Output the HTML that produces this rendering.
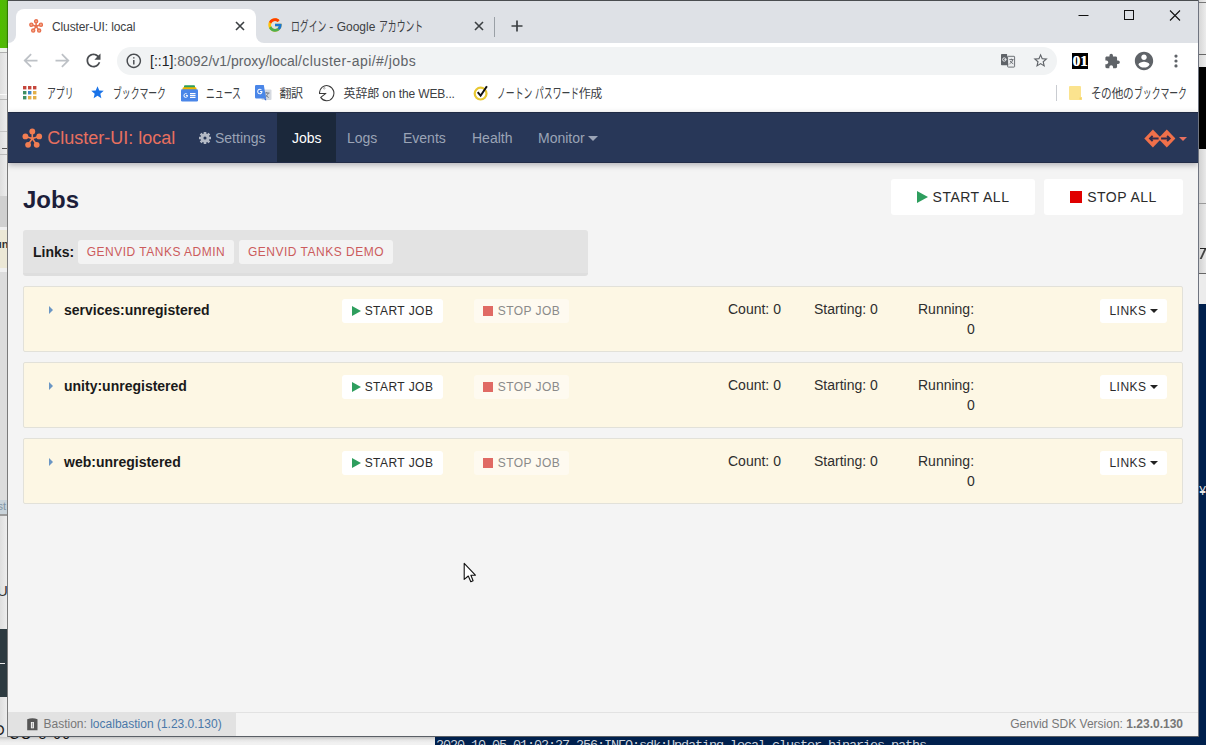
<!DOCTYPE html>
<html lang="ja">
<head>
<meta charset="utf-8">
<title>Cluster-UI: local</title>
<style>
*{box-sizing:border-box;margin:0;padding:0}
html,body{width:1206px;height:745px;overflow:hidden}
body{position:relative;background:#e9e9e9;font-family:"Liberation Sans","Noto Sans CJK JP",sans-serif;color:#222}
.abs{position:absolute}
/* desktop behind */
#desk-left{left:0;top:0;width:8px;height:745px;background:linear-gradient(90deg,#dedede,#efefef);overflow:hidden}
#desk-right{left:1198px;top:0;width:8px;height:745px;background:#00204d;overflow:hidden}
#desk-bottom{left:0;top:737px;width:435px;height:8px;background:linear-gradient(#c4c4c4,#e6e6e6 3px,#f1f1f1 6px);overflow:hidden}
#term-bottom{left:435px;top:737px;width:771px;height:8px;background:#00204d;overflow:hidden}
/* chrome window */
#win{left:8px;top:1px;width:1190px;height:735px;background:#f4f4f4;overflow:hidden}
#tabstrip{left:0;top:0;width:1190px;height:42px;background:#dee1e6;z-index:2}
#tab1{left:8px;top:8px;width:240px;height:34px;background:#fff;border-radius:8px 8px 0 0}
#toolbar{left:0;top:41px;width:1190px;height:37px;background:#fff}
#omni{left:109px;top:5px;width:940px;height:28px;border-radius:14px;background:#f1f3f4}
#bookmarks{left:0;top:78px;width:1190px;height:33px;background:#fff}
.ui{font-family:"Liberation Sans","Noto Sans CJK JP",sans-serif;font-size:12px;color:#3c4043;white-space:nowrap}
.jp{display:inline-block;transform-origin:0 50%;white-space:nowrap;font-size:14px;vertical-align:top;position:relative;top:-1px}
/* page */
#page{left:0;top:111px;width:1190px;height:624px;background:#f4f4f4;font-family:"Liberation Sans",sans-serif}
#navbar{left:0;top:0;width:1190px;height:51px;background:#283758;box-shadow:0 2px 6px rgba(0,0,20,.28)}
#navbar:before,#navbar:after{content:'';position:absolute;left:0;width:1190px;height:1px;background:#1f2a44;top:0;z-index:3}
#navbar:after{top:50px;background:#222c47}
#nav-active{left:269px;top:0;width:59px;height:51px;background:#1b283b}
.nav{top:0;height:51px;line-height:52px;font-size:14px;color:#9ba4b6;white-space:nowrap}
.btn{background:#fff;border-radius:3px;white-space:nowrap;color:#2b2b2b;letter-spacing:.5px}
.card{left:15px;width:1160px;height:66px;background:#fdf7e4;border:1px solid #e2e1d9;border-radius:2px}
.card .name{left:40px;top:15px;font-size:14px;font-weight:bold;color:#1a1a1a;white-space:nowrap}
.card .tri{left:25px;top:19px;width:0;height:0;border-left:4.5px solid #6a96c4;border-top:4px solid transparent;border-bottom:4px solid transparent}
.card .start{left:318px;top:12px;width:101px;height:24px;font-size:12px;line-height:24px;letter-spacing:.45px}
.card .stop{left:450px;top:12px;width:95px;height:24px;font-size:12px;line-height:24px;letter-spacing:.45px;color:#8a8a8a;background:#fefaf0}
.card .links{left:1076px;top:12px;width:67px;height:24px;font-size:12px;line-height:24px}
.card .stat{top:14px;font-size:14px;color:#2e2e2e;white-space:nowrap}
.play{display:inline-block;width:0;height:0;border-left:9px solid #2e9e5e;border-top:5px solid transparent;border-bottom:5px solid transparent;vertical-align:-1px;margin-right:4px}
.sq{display:inline-block;width:10px;height:10px;background:#e06a64;vertical-align:-1px;margin-right:5px}
.caret{display:inline-block;width:0;height:0;border-top:4px solid #222;border-left:4px solid transparent;border-right:4px solid transparent;vertical-align:2px;margin-left:3px}
</style>
</head>
<body>
<div id="desk-left" class="abs">
  <div class="abs" style="left:0;top:0;width:8px;height:48px;background:linear-gradient(90deg,#4fbd00 0,#52b60a 80%,#2f7d00 90%)"></div>
  <div class="abs" style="left:0;top:48px;width:8px;height:4px;background:#eef2ec"></div>
  <div class="abs" style="left:0;top:52px;width:8px;height:1px;background:#b0b0b0"></div>
  <div class="abs" style="left:0;top:94px;width:8px;height:1px;background:#fafafa"></div>
  <div class="abs" style="left:0;top:99px;width:8px;height:1px;background:#b8b8b8"></div>
  <div class="abs" style="left:0;top:131px;width:8px;height:1px;background:#c4c4c4"></div>
  <div class="abs" style="left:2px;top:148px;width:6px;height:1px;background:#555"></div>
  <div class="abs" style="left:0;top:154px;width:8px;height:1px;background:#bbb"></div>
  <div class="abs" style="left:0;top:196px;width:8px;height:31px;background:#d0d0d0"></div>
  <div class="abs" style="left:0;top:227px;width:8px;height:3px;background:#f0f0f0"></div>
  <div class="abs" style="left:0;top:230px;width:8px;height:38px;background:#ece8d6"></div>
  <div class="abs" style="left:-5px;top:238px;font-size:11px;line-height:13px;color:#333;font-weight:bold">un</div>
  <div class="abs" style="left:0;top:268px;width:8px;height:4px;background:#f0f0f0"></div>
  <div class="abs" style="left:0;top:272px;width:8px;height:228px;background:#dcdcdc"></div>
  <div class="abs" style="left:0;top:500px;width:8px;height:14px;background:#c9d3da"></div>
  <div class="abs" style="left:-5px;top:500px;font-size:11px;line-height:13px;color:#7f95a6">ist</div>
  <div class="abs" style="left:0;top:514px;width:8px;height:2px;background:#9a9a9a"></div>
  <div class="abs" style="left:-3px;top:582px;font-size:15px;line-height:17px;color:#333">U</div>
  <div class="abs" style="left:0;top:629px;width:8px;height:68px;background:#2d3a40"></div>
  <div class="abs" style="left:0;top:663px;width:5px;height:1px;background:#e8e8e8"></div>
  <div class="abs" style="left:-7px;top:721px;font-size:15px;line-height:17px;color:#222">O</div>
  <div class="abs" style="left:7px;top:48px;width:1px;height:689px;background:#7a7a7a"></div>
</div>
<div id="desk-right" class="abs">
  <div class="abs" style="left:0;top:0;width:8px;height:67px;background:linear-gradient(90deg,#d4d4d4,#ececec)"></div>
  <div class="abs" style="left:0;top:2px;width:8px;height:1px;background:#777"></div>
  <div class="abs" style="left:0;top:54px;width:8px;height:1px;background:#666"></div>
  <div class="abs" style="left:0;top:67px;width:8px;height:82px;background:#000"></div>
  <div class="abs" style="left:0;top:149px;width:8px;height:155px;background:linear-gradient(90deg,#cfcfcf,#e9e9e9)"></div>
  <div class="abs" style="left:1px;top:203px;width:7px;height:1px;background:#999"></div>
  <div class="abs" style="left:2px;top:248px;width:6px;height:1px;background:#222"></div>
  <div class="abs" style="left:4px;top:249px;width:2px;height:10px;background:#444;transform:skewX(-25deg)"></div>
  <div class="abs" style="left:0;top:273px;width:8px;height:1px;background:#666"></div>
  <div class="abs" style="left:0;top:274px;width:8px;height:30px;background:#ececec"></div>
  <div class="abs" style="left:1px;top:485px;font-size:12px;line-height:14px;color:#e8e8e8;font-family:'Liberation Mono',monospace">¥</div>
  <div class="abs" style="left:0;top:0;width:1px;height:737px;background:#6f7480"></div>
</div>
<div id="desk-bottom" class="abs">
  <div class="abs ui" style="left:9px;top:-10.300px;font-size:14px;line-height:14px;color:#111;letter-spacing:1.500px">CO 8 60</div>
</div>
<div id="term-bottom" class="abs"><div class="abs" style="left:1px;top:2px;font-family:'Liberation Mono',monospace;font-size:13.5px;line-height:14px;letter-spacing:-1.1px;color:#cdd3dc;white-space:pre">2020-10-05 01:02:27.256:INFO:sdk:Updating local cluster binaries paths</div></div>
<div class="abs" style="left:8px;top:0;width:1190px;height:1px;background:#4a4d50"></div>
<div class="abs" style="left:8px;top:736px;width:1191px;height:1px;background:#5a5f66"></div>

<div id="win" class="abs">
  <div id="tabstrip" class="abs">
    <div class="abs" style="left:0;top:34px;width:8px;height:8px;background:#fff"></div>
    <div class="abs" style="left:-8px;top:26px;width:16px;height:16px;border-radius:8px;background:#dee1e6"></div>
    <div class="abs" style="left:248px;top:34px;width:8px;height:8px;background:#fff"></div>
    <div class="abs" style="left:248px;top:26px;width:16px;height:16px;border-radius:8px;background:#dee1e6"></div>
    <div id="tab1" class="abs"></div>
    <svg class="abs" style="left:20.800px;top:17.500px" width="14.500" height="14.500" viewBox="0 0 21 21"><g stroke="#e8714f" stroke-width="2.200" stroke-linecap="round"><line x1="10.300" y1="10.600" x2="10.300" y2="3.400"/><line x1="10.300" y1="10.600" x2="3.400" y2="8.400"/><line x1="10.300" y1="10.600" x2="17.200" y2="8.400"/><line x1="10.300" y1="10.600" x2="6.100" y2="16.800"/><line x1="10.300" y1="10.600" x2="14.700" y2="16.800"/></g><g fill="#f6a98c" stroke="#e8714f" stroke-width="1.900"><circle cx="10.300" cy="3.400" r="2.300"/><circle cx="3.400" cy="8.400" r="2.300"/><circle cx="17.200" cy="8.400" r="2.300"/><circle cx="6.100" cy="16.800" r="2.300"/><circle cx="14.700" cy="16.800" r="2.300"/></g><circle cx="10.300" cy="10.600" r="2" fill="#e8714f"/></svg>
    <div class="abs ui" style="left:44px;top:19px;color:#3c4043;letter-spacing:-.12px">Cluster-UI: local</div>
    <svg class="abs" style="left:224px;top:17px" width="16" height="16" viewBox="0 0 16 16"><path d="M4 4L12 12M12 4L4 12" stroke="#3c4043" stroke-width="1.6" fill="none"/></svg>
    <svg class="abs" style="left:258.500px;top:16.200px" width="16" height="16" viewBox="0 0 48 48"><path fill="#FFC107" d="M43.611 20.083H42V20H24v8h11.303c-1.649 4.657-6.08 8-11.303 8-6.627 0-12-5.373-12-12s5.373-12 12-12c3.059 0 5.842 1.154 7.961 3.039l5.657-5.657C34.046 6.053 29.268 4 24 4 12.955 4 4 12.955 4 24s8.955 20 20 20 20-8.955 20-20c0-1.341-.138-2.65-.389-3.917z"/><path fill="#FF3D00" d="M6.306 14.691l6.571 4.819C14.655 15.108 18.961 12 24 12c3.059 0 5.842 1.154 7.961 3.039l5.657-5.657C34.046 6.053 29.268 4 24 4 16.318 4 9.656 8.337 6.306 14.691z"/><path fill="#4CAF50" d="M24 44c5.166 0 9.86-1.977 13.409-5.192l-6.19-5.238A11.91 11.91 0 0124 36c-5.202 0-9.619-3.317-11.283-7.946l-6.522 5.025C9.505 39.556 16.227 44 24 44z"/><path fill="#1976D2" d="M43.611 20.083H42V20H24v8h11.303a12.04 12.04 0 01-4.087 5.571l.003-.002 6.19 5.238C36.971 39.205 44 34 44 24c0-1.341-.138-2.65-.389-3.917z"/></svg>
    <div class="abs ui" style="left:283px;top:18px;color:#3c4043;line-height:16px"><span class="jp" style="width:35.0px;transform:scaleX(.63)">ログイン</span> - Google <span class="jp" style="width:43.8px;transform:scaleX(.63)">アカウント</span></div>
    <svg class="abs" style="left:463px;top:17px" width="16" height="16" viewBox="0 0 16 16"><path d="M4 4L12 12M12 4L4 12" stroke="#3c4043" stroke-width="1.6" fill="none"/></svg>
    <div class="abs" style="left:486px;top:16px;width:1px;height:20px;background:#9aa0a6"></div>
    <svg class="abs" style="left:501px;top:17px" width="16" height="16" viewBox="0 0 16 16"><path d="M8 2.5V13.5M2.5 8H13.5" stroke="#3c4043" stroke-width="1.7"/></svg>
    <svg class="abs" style="left:1060px;top:0" width="130" height="30" viewBox="0 0 130 30"><path d="M10.5 14.5H20.5" stroke="#111" stroke-width="1"/><rect x="56.5" y="9.5" width="9" height="9" fill="none" stroke="#111" stroke-width="1"/><path d="M102 9.5L112 19.5M112 9.5L102 19.5" stroke="#111" stroke-width="1.1"/></svg>
  </div>
  <div id="toolbar" class="abs">
<div id="omni" class="abs"></div>
<svg class="abs" style="left:11.5px;top:7.8px" width="21" height="21" viewBox="0 0 24 24" ><path fill="#bdc1c6" d="M20 11H7.83l5.59-5.59L12 4l-8 8 8 8 1.41-1.41L7.83 13H20v-2z"/></svg>
<svg class="abs" style="left:43.5px;top:7.8px" width="21" height="21" viewBox="0 0 24 24" ><path fill="#bdc1c6" d="M12 4l-1.41 1.41L16.17 11H4v2h12.17l-5.58 5.59L12 20l8-8z"/></svg>
<svg class="abs" style="left:75.3px;top:7.8px" width="21" height="21" viewBox="0 0 24 24" ><path fill="#4a4d51" d="M17.65 6.35C16.2 4.9 14.21 4 12 4c-4.42 0-7.99 3.58-7.99 8s3.57 8 7.99 8c3.73 0 6.84-2.55 7.73-6h-2.08c-.82 2.33-3.04 4-5.65 4-3.31 0-6-2.69-6-6s2.69-6 6-6c1.66 0 3.14.69 4.22 1.78L13 11h7V4l-2.35 2.35z"/></svg>
<svg class="abs" style="left:117.2px;top:9.7px" width="17.6" height="17.6" viewBox="0 0 24 24" ><path fill="#4a4d51" d="M11 17h2v-6h-2v6zm1-15C6.48 2 2 6.48 2 12s4.48 10 10 10 10-4.48 10-10S17.52 2 12 2zm0 18c-4.41 0-8-3.59-8-8s3.59-8 8-8 8 3.59 8 8-3.59 8-8 8zM11 9h2V7h-2v2z"/></svg>
<div class="abs ui" style="left:142px;top:11px;font-size:14px;letter-spacing:0;color:#5f6368"><span style="color:#202124">[::1]</span>:8092/v1/proxy/local<span style="letter-spacing:.45px">/cluster-api/#/jobs</span></div>
<svg class="abs" style="left:993px;top:11.800px" width="15" height="15" viewBox="0 0 15 15"><rect x="6.600" y="2.300" width="7" height="10.800" rx=".6" fill="#eceef0" stroke="#5f6368" stroke-width=".9"/><path d="M8.300 5.600h4.200M10.400 4.700v.9M11.700 5.600c-.4 2-1.500 3.300-3.100 4.200M9.200 7c.7 1.300 1.700 2.200 3.100 2.800" stroke="#5f6368" stroke-width=".9" fill="none"/><path d="M.8 0h5.200l1.300 11.300H.8a.8.800 0 0 1-.8-.8V.8A.8.800 0 0 1 .8 0z" fill="#5f6368"/><circle cx="3.300" cy="5.500" r="1.700" fill="none" stroke="#e8eaed" stroke-width="1"/><path d="M3.300 5.500h2" stroke="#e8eaed" stroke-width=".9"/></svg>
<svg class="abs" style="left:1023.800px;top:10.200px" width="17.200" height="17.200" viewBox="0 0 24 24" ><path fill="#5f6368" d="M22 9.24l-7.19-.62L12 2 9.19 8.63 2 9.24l5.46 4.73L5.82 21 12 17.27 18.18 21l-1.63-7.03L22 9.24zM12 15.4l-3.76 2.27 1-4.28-3.32-2.88 4.38-.38L12 6.1l1.71 4.04 4.38.38-3.32 2.88 1 4.28L12 15.4z"/></svg>
<div class="abs" style="left:1064px;top:11px;width:16px;height:16px;background:#000;color:#fff;font-family:'Liberation Serif',serif;font-weight:bold;font-size:15px;line-height:16px;text-align:center;letter-spacing:0;text-shadow:.4px 0 0 #fff">01</div>
<svg class="abs" style="left:1095.75px;top:10.75px" width="16.5" height="16.5" viewBox="0 0 24 24" ><path fill="#5f6368" d="M20.5 11H19V7c0-1.1-.9-2-2-2h-4V3.5C13 2.12 11.88 1 10.5 1S8 2.12 8 3.5V5H4c-1.1 0-1.99.9-1.99 2v3.8H3.5c1.49 0 2.7 1.21 2.7 2.7s-1.21 2.7-2.7 2.7H2V20c0 1.1.9 2 2 2h3.8v-1.5c0-1.49 1.21-2.7 2.7-2.7 1.49 0 2.7 1.21 2.7 2.7V22H17c1.1 0 2-.9 2-2v-4h1.5c1.38 0 2.5-1.12 2.5-2.5S21.88 11 20.5 11z"/></svg>
<svg class="abs" style="left:1125.2px;top:8.0px" width="22" height="22" viewBox="0 0 24 24" ><path fill="#5f6368" d="M12 2C6.48 2 2 6.48 2 12s4.48 10 10 10 10-4.48 10-10S17.52 2 12 2zm0 3c1.66 0 3 1.34 3 3s-1.34 3-3 3-3-1.34-3-3 1.34-3 3-3zm0 14.2c-2.5 0-4.71-1.28-6-3.22.03-1.99 4-3.08 6-3.08 1.99 0 5.97 1.09 6 3.08-1.29 1.94-3.5 3.22-6 3.22z"/></svg>
<svg class="abs" style="left:1165.4px;top:11.4px" width="6" height="16" viewBox="0 0 6 16"><g fill="#5f6368"><circle cx="3" cy="3.1" r="1.6"/><circle cx="3" cy="8" r="1.6"/><circle cx="3" cy="12.9" r="1.6"/></g></svg>
</div>
<div id="bookmarks" class="abs">
<div class="abs ui" style="left:38.5px;top:6.5px;font-size:12px;color:#3c4043;line-height:16px;height:16px"><span class="jp" style="width:26.2px;transform:scaleX(.63)">アプリ</span></div>
<div class="abs ui" style="left:104.5px;top:6.5px;font-size:12px;color:#3c4043;line-height:16px;height:16px"><span class="jp" style="width:52.5px;transform:scaleX(.63)">ブックマーク</span></div>
<div class="abs ui" style="left:197.5px;top:6.5px;font-size:12px;color:#3c4043;line-height:16px;height:16px"><span class="jp" style="width:35.0px;transform:scaleX(.63)">ニュース</span></div>
<div class="abs ui" style="left:271.5px;top:6.5px;font-size:12px;color:#3c4043;line-height:16px;height:16px"><span style="letter-spacing:-.5px">翻訳</span></div>
<div class="abs ui" style="left:335.5px;top:6.5px;font-size:12px;color:#3c4043;line-height:16px;height:16px"><span style="letter-spacing:-.12px">英辞郎 on the WEB...</span></div>
<div class="abs ui" style="left:488.5px;top:6.5px;font-size:12px;color:#3c4043;line-height:16px;height:16px"><span class="jp" style="width:35.0px;transform:scaleX(.63)">ノートン</span> <span class="jp" style="width:43.8px;transform:scaleX(.63)">パスワード</span><span style="letter-spacing:-.4px">作成</span></div>
<div class="abs ui" style="left:1083px;top:6.5px;font-size:12px;color:#3c4043;line-height:16px;height:16px"><span class="jp" style="width:10.2px;transform:scaleX(.76)">そ</span><span class="jp" style="width:10.2px;transform:scaleX(.76)">の</span><span>他</span><span class="jp" style="width:10.2px;transform:scaleX(.76)">の</span><span class="jp" style="width:52.5px;transform:scaleX(.63)">ブックマーク</span></div>
<svg class="abs" style="left:15px;top:7px" width="14" height="14" viewBox="0 0 14 14"><rect x="0" y="0" width="3.4" height="3.4" fill="#c5463c"/><rect x="5" y="0" width="3.4" height="3.4" fill="#c5463c"/><rect x="10" y="0" width="3.4" height="3.4" fill="#c5463c"/><rect x="0" y="5" width="3.4" height="3.4" fill="#3f8f63"/><rect x="5" y="5" width="3.4" height="3.4" fill="#3d86c6"/><rect x="10" y="5" width="3.4" height="3.4" fill="#e2b04a"/><rect x="0" y="10" width="3.4" height="3.4" fill="#3f8f63"/><rect x="5" y="10" width="3.4" height="3.4" fill="#e2b04a"/><rect x="10" y="10" width="3.4" height="3.4" fill="#e2b04a"/></svg>
<svg class="abs" style="left:81.5px;top:6.0px" width="15" height="15" viewBox="0 0 24 24" ><path fill="#1a73e8" d="M12 17.27L18.18 21l-1.64-7.03L22 9.24l-7.19-.61L12 2 9.19 8.63 2 9.24l5.46 4.73L5.82 21z"/></svg>
<svg class="abs" style="left:173px;top:5.5px" width="17" height="17" viewBox="0 0 17 17"><rect x="3" y="0.3" width="11" height="6" rx="1" fill="#2e9e5b"/><rect x="1.6" y="2.2" width="13.800" height="6" rx="1" fill="#f2b600"/><rect x="0" y="4.300" width="17" height="12.200" rx="1.300" fill="#4a86e8"/><path d="M6.800 10.100H4.900v.9h1c-.1.600-.6.900-1.100.9-.8 0-1.400-.6-1.400-1.400s.6-1.400 1.400-1.400c.35 0 .65.120.9.350l.65-.65C5.900 8.400 5.400 8.200 4.800 8.200c-1.300 0-2.300 1-2.300 2.300s1 2.300 2.300 2.300c1.300 0 2.100-.9 2.100-2.200 0-.17 0-.33-.1-.5z" fill="#fff"/><path d="M9 8.600h5.500M9 10.500h5.500M9 12.400h5.500" stroke="#fff" stroke-width="1.100"/></svg>
<svg class="abs" style="left:247px;top:6px" width="17" height="16" viewBox="0 0 17 16"><rect x="6.500" y="4.500" width="10" height="10.500" rx="1" fill="#d5d9e0"/><path d="M9 8h5.500M11.700 7v1M13.200 8c-.5 2.200-1.800 3.500-3.500 4.400M10.300 9.500c.8 1.400 1.900 2.300 3.400 3" stroke="#6f7785" stroke-width=".9" fill="none"/><path d="M1.200 0H8.800l2.300 13.500H1.200A1.200 1.200 0 0 1 0 12.300V1.200A1.200 1.200 0 0 1 1.200 0z" fill="#4a86e8"/><path d="M7.300 6.100H5v1h1.300c-.15.800-.8 1.200-1.400 1.200-.95 0-1.700-.8-1.700-1.800s.75-1.800 1.700-1.800c.45 0 .85.170 1.150.45l.7-.7C6.200 3.950 5.600 3.700 4.900 3.700 3.400 3.700 2.200 4.900 2.200 6.500s1.200 2.800 2.700 2.800c1.500 0 2.500-1.100 2.500-2.600 0-.2-.03-.4-.1-.6z" fill="#fff"/><path d="M8.600 13.500l2.500 2.300v-2.300z" fill="#3367d6"/></svg>
<svg class="abs" style="left:311px;top:5.799999999999997px" width="16" height="17" viewBox="0 0 16 17"><path d="M0.500 8.600L6.900 8.400L1.700 12.400A7.200 7.600 0 1 0 0.500 8.600Z" fill="none" stroke="#3a3a3a" stroke-width="1.050" stroke-linejoin="round"/><circle cx="5.300" cy="3.300" r=".8" fill="none" stroke="#777" stroke-width=".6"/></svg>
<svg class="abs" style="left:464.7px;top:4.7px" width="17" height="17" viewBox="0 0 17 17"><circle cx="7.600" cy="9.600" r="5.900" fill="#fff" stroke="#e8c832" stroke-width="2.200"/><path d="M4.700 8.200L7.600 11.700L13.900 2.300" fill="none" stroke="#111" stroke-width="2"/></svg>
<div class="abs" style="left:1048px;top:6px;width:1px;height:16px;background:#c9ccd1"></div>
<svg class="abs" style="left:1061px;top:7px" width="13" height="14" viewBox="0 0 13 14"><path d="M1 0H11A1 1 0 0 1 12 1V11H13V14H1A1 1 0 0 1 0 13V1A1 1 0 0 1 1 0Z" fill="#fbe38e"/><path d="M10.500 11.500H12.500V13.500H10.500Z" fill="#f3d268"/></svg>
</div>

  <div id="page" class="abs">
    <div id="navbar" class="abs">
      <div id="nav-active" class="abs"></div>
      <svg class="abs" style="left:14px;top:16px" width="21" height="21" viewBox="0 0 21 21"><g stroke="#f27d52" stroke-width="1.6" stroke-linecap="round"><line x1="10.3" y1="10.6" x2="10.3" y2="3.4"/><line x1="10.3" y1="10.6" x2="3.4" y2="8.4"/><line x1="10.3" y1="10.6" x2="17.2" y2="8.4"/><line x1="10.3" y1="10.6" x2="6.1" y2="16.8"/><line x1="10.3" y1="10.6" x2="14.7" y2="16.8"/></g><g fill="#f27d52"><circle cx="10.3" cy="3.4" r="2.9"/><circle cx="3.4" cy="8.4" r="2.9"/><circle cx="17.2" cy="8.4" r="2.9"/><circle cx="6.1" cy="16.8" r="2.9"/><circle cx="14.7" cy="16.8" r="2.9"/><circle cx="10.3" cy="10.6" r="1.6"/></g></svg>
      <div class="abs nav" style="left:39.300px;font-size:18px;color:#e8705f">Cluster-UI: local</div>
      <svg class="abs" style="left:191px;top:20px" width="12" height="12" viewBox="0 0 12 12"><g fill="#b3b9c5"><rect x="4.7" y="-0.2" width="2.6" height="3.2" rx=".4" transform="rotate(0 6 6)"/><rect x="4.7" y="-0.2" width="2.6" height="3.2" rx=".4" transform="rotate(45 6 6)"/><rect x="4.7" y="-0.2" width="2.6" height="3.2" rx=".4" transform="rotate(90 6 6)"/><rect x="4.7" y="-0.2" width="2.6" height="3.2" rx=".4" transform="rotate(135 6 6)"/><rect x="4.7" y="-0.2" width="2.6" height="3.2" rx=".4" transform="rotate(180 6 6)"/><rect x="4.7" y="-0.2" width="2.6" height="3.2" rx=".4" transform="rotate(225 6 6)"/><rect x="4.7" y="-0.2" width="2.6" height="3.2" rx=".4" transform="rotate(270 6 6)"/><rect x="4.7" y="-0.2" width="2.6" height="3.2" rx=".4" transform="rotate(315 6 6)"/></g><circle cx="6" cy="6" r="3" fill="none" stroke="#b3b9c5" stroke-width="2.900"/></svg>
      <div class="abs nav" style="left:207px">Settings</div>
      <div class="abs nav" style="left:284px;color:#fff">Jobs</div>
      <div class="abs nav" style="left:339px">Logs</div>
      <div class="abs nav" style="left:395px">Events</div>
      <div class="abs nav" style="left:464px">Health</div>
      <svg class="abs" style="left:1136px;top:17px" width="32" height="19" viewBox="0 0 32 19"><g fill="#f0704a"><path d="M8.9 0.4 L0.3 9.5 L8.9 18.6 L17.5 9.5 Z"/><path d="M22.8 0.4 L14.2 9.5 L22.8 18.6 L31.4 9.5 Z"/></g><g fill="none" stroke="#2e2d4c" stroke-width="1.9"><path d="M6.4 9.5 H14.6 M8.6 6.9 L6 9.5 L8.6 12.1"/><path d="M17.1 9.5 H25.3 M23.1 6.9 L25.7 9.5 L23.1 12.1"/></g></svg><div class="abs" style="left:1170.5px;top:25px;width:0;height:0;border-top:4.5px solid #e8705f;border-left:4px solid transparent;border-right:4px solid transparent"></div>
      <div class="abs nav" style="left:530px">Monitor<span class="caret" style="border-top:5px solid #9ba4b6;border-left:5px solid transparent;border-right:5px solid transparent;margin-left:3px;vertical-align:2px"></span></div>
    </div>
    <div class="abs" style="left:15px;top:74px;font-size:24px;font-weight:bold;color:#1c1e3a">Jobs</div>
    <div class="abs btn" style="left:883px;top:67px;width:144px;height:36px;font-size:14px;line-height:37px;text-align:center"><span class="play" style="border-left-width:11px;border-top-width:6px;border-bottom-width:6px;margin-right:5px"></span>START ALL</div>
    <div class="abs btn" style="left:1036px;top:67px;width:139px;height:36px;font-size:14px;line-height:37px;text-align:center"><span class="sq" style="background:#e00000;width:12px;height:12px"></span>STOP ALL</div>

    <div class="abs" style="left:15px;top:118px;width:565px;height:46px;background:#e3e3e3;border-bottom:3px solid #dedede;border-radius:3px"></div>
    <div class="abs" style="left:25px;top:132px;font-size:14px;font-weight:bold;color:#1a1a1a">Links:</div>
    <div class="abs btn" style="left:70px;top:128px;width:156px;height:24px;font-size:12px;line-height:24px;text-align:center;color:#cc5b5c;background:#f3f3f3">GENVID TANKS ADMIN</div>
    <div class="abs btn" style="left:231px;top:128px;width:154px;height:24px;font-size:12px;line-height:24px;text-align:center;color:#cc5b5c;background:#f3f3f3">GENVID TANKS DEMO</div>

    <div class="abs card" style="top:174px">
      <div class="abs tri"></div><div class="abs name">services:unregistered</div>
      <div class="abs btn start" style="text-align:center"><span class="play"></span>START JOB</div>
      <div class="abs btn stop" style="text-align:center"><span class="sq"></span>STOP JOB</div>
      <div class="abs stat" style="left:704px">Count: 0</div>
      <div class="abs stat" style="left:790px">Starting: 0</div>
      <div class="abs stat" style="left:894px">Running:</div>
      <div class="abs stat" style="left:943px;top:34px">0</div>
      <div class="abs btn links" style="text-align:center">LINKS<span class="caret"></span></div>
    </div>
    <div class="abs card" style="top:250px">
      <div class="abs tri"></div><div class="abs name">unity:unregistered</div>
      <div class="abs btn start" style="text-align:center"><span class="play"></span>START JOB</div>
      <div class="abs btn stop" style="text-align:center"><span class="sq"></span>STOP JOB</div>
      <div class="abs stat" style="left:704px">Count: 0</div>
      <div class="abs stat" style="left:790px">Starting: 0</div>
      <div class="abs stat" style="left:894px">Running:</div>
      <div class="abs stat" style="left:943px;top:34px">0</div>
      <div class="abs btn links" style="text-align:center">LINKS<span class="caret"></span></div>
    </div>
    <div class="abs card" style="top:326px">
      <div class="abs tri"></div><div class="abs name">web:unregistered</div>
      <div class="abs btn start" style="text-align:center"><span class="play"></span>START JOB</div>
      <div class="abs btn stop" style="text-align:center"><span class="sq"></span>STOP JOB</div>
      <div class="abs stat" style="left:704px">Count: 0</div>
      <div class="abs stat" style="left:790px">Starting: 0</div>
      <div class="abs stat" style="left:894px">Running:</div>
      <div class="abs stat" style="left:943px;top:34px">0</div>
      <div class="abs btn links" style="text-align:center">LINKS<span class="caret"></span></div>
    </div>

    <div class="abs" style="left:0;top:600px;width:1190px;height:1px;background:#e2e2e2"></div>
    <div class="abs" style="left:0;top:601px;width:228px;height:24px;background:#e2e2e2"></div>
    <svg class="abs" style="left:18.500px;top:605.500px" width="11" height="13" viewBox="0 0 11 13"><path d="M0.200 1.200Q5.500 -0.600 10.500 1.200V12.300H0.200Z" fill="#555"/><rect x="3.900" y="4" width="3" height="6.300" fill="#f4f4f4"/><rect x="4.900" y="4.600" width="1" height="5" fill="#999"/></svg>
    <div class="abs" style="left:35.5px;top:605px;font-size:12px;color:#777;white-space:nowrap">Bastion: <span style="color:#4a78a8">localbastion (1.23.0.130)</span></div>
    <div class="abs" style="right:15px;top:605px;font-size:12px;color:#777;white-space:nowrap">Genvid SDK Version: <b>1.23.0.130</b></div>
  </div>
</div>
<svg class="abs" style="left:463px;top:562px;z-index:50" width="15" height="22" viewBox="0 0 15 22"><path d="M1.200 1.300V17.400L5.300 14L7.800 19.700L10.100 18.700L7.900 13.200H12.400Z" fill="#fff" stroke="#111" stroke-width="1.100" stroke-linejoin="round"/></svg>
</body>
</html>
